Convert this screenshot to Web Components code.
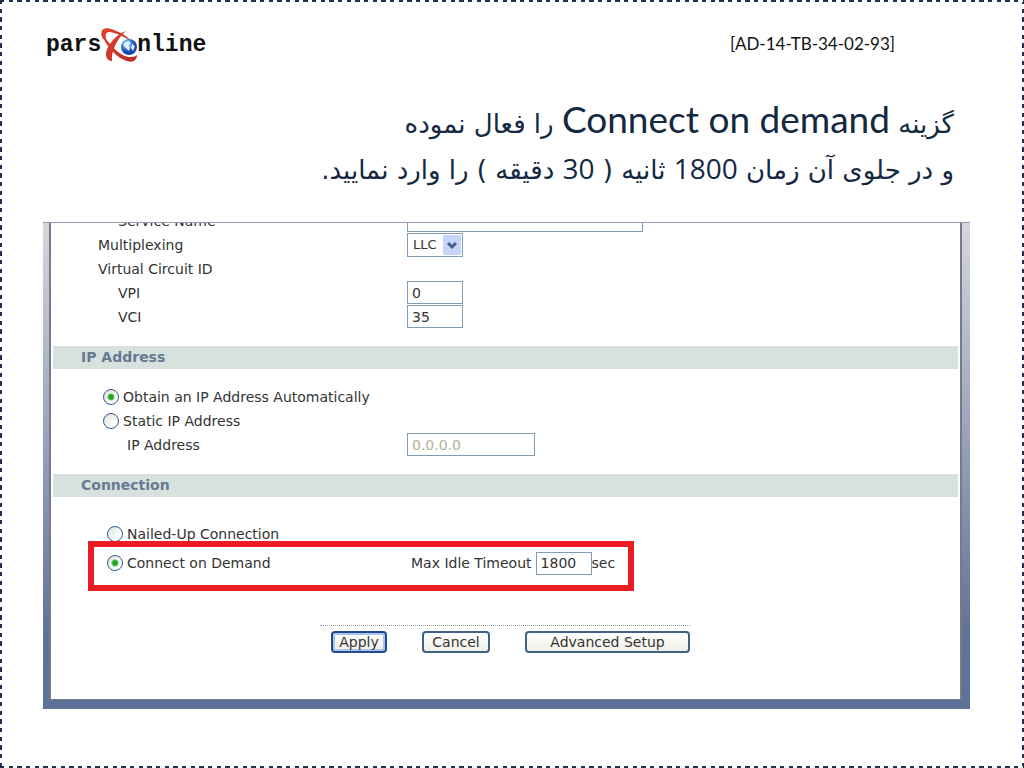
<!DOCTYPE html>
<html lang="fa">
<head>
<meta charset="utf-8">
<title>Connect on demand</title>
<style>
html, body { margin: 0; background: #fff; }
</style>
</head>
<body>
<training-slide>
  <brand-logo slot="logo"></brand-logo>
  <span slot="code">[AD-14-TB-34-02-93]</span>
  <slide-title slot="title"></slide-title>
  <router-panel>
    <form-row label="Service Name" indent="2" width="236"></form-row>
    <form-row label="Multiplexing" indent="1" kind="select" value="LLC"></form-row>
    <form-row label="Virtual Circuit ID" indent="1" kind="none"></form-row>
    <form-row label="VPI" indent="2" value="0"></form-row>
    <form-row label="VCI" indent="2" value="35"></form-row>
    <section-bar>IP Address</section-bar>
    <address-options></address-options>
    <section-bar>Connection</section-bar>
    <connection-options></connection-options>
    <form-actions></form-actions>
  </router-panel>
</training-slide>

<script>
const controls = `
  * { box-sizing: border-box; }
  input, select, button { font: inherit; margin: 0; color: #333; }
  label { color: #333; white-space: nowrap; }
  input[type=text] { width: 56px; height: 23px; padding: 0 4px; border: 1px solid #7f9db9; border-radius: 0; background: #fff; outline: 0; }
  input[type=text]:disabled { color: #b5b09c; }
  input[type=radio] { appearance: none; width: 16px; height: 16px; flex: none; border: 1px solid #2f5a88; border-radius: 50%;
    background: linear-gradient(135deg, #dcdcd6, #fff 70%); }
  input[type=radio]:checked { background: radial-gradient(circle, #21a121 0 2px, #5cc55a 3px, transparent 4px), linear-gradient(135deg, #dcdcd6, #fff 70%); }
  .option { display: flex; align-items: center; gap: 4px; height: 24px; }
`;

function define(name, render) {
  customElements.define(name, class extends HTMLElement {
    connectedCallback() {
      if (this.shadowRoot) return;
      this.attachShadow({ mode: "open" }).innerHTML = render(this);
    }
  });
}

define("training-slide", () => {
  const dashes = angle => `repeating-linear-gradient(${angle}, #1d2f54 0 4px, #fff 4px 9px, #1d2f54 9px 13px, #fff 13px 17px, #1d2f54 17px 22px, #fff 22px 26px)`;
  return `
  <style>
    :host { display: block; box-sizing: border-box; min-height: 100vh; padding: 25px 54px 59px 43px;
      background:
        ${dashes("90deg")} top / 100% 2px no-repeat,
        ${dashes("90deg")} bottom / 100% 2px no-repeat,
        ${dashes("180deg")} left / 2px 100% no-repeat,
        ${dashes("180deg")} right / 2px 100% no-repeat,
        #fff; }
    header { display: flex; justify-content: space-between; align-items: center; height: 38px; padding: 0 75px 0 3px; }
    .code { font: 17px/20px Lato, sans-serif; color: #111; }
    .title { padding: 32px 16px 0 0; height: 127px; }
  </style>
  <header><slot name="logo"></slot><div class="code"><slot name="code"></slot></div></header>
  <div class="title"><slot name="title"></slot></div>
  <main><slot></slot></main>`;
});

define("brand-logo", () => `
  <style>
    :host { display: flex; align-items: center; font: bold 23px/28px "Liberation Mono", monospace; color: #111; }
    span { padding-top: 2px; }
    svg { display: block; width: 36px; height: 38px; }
  </style>
  <span>pars</span>
  <svg viewBox="0 0 36 38" aria-hidden="true">
    <defs>
      <radialGradient id="globe" cx="35%" cy="30%"><stop offset="0" stop-color="#cfeaff"/><stop offset=".6" stop-color="#4386dc"/><stop offset="1" stop-color="#1746ae"/></radialGradient>
      <linearGradient id="red" x2="1" y2="1"><stop stop-color="#e8432f"/><stop offset="1" stop-color="#b92a20"/></linearGradient>
    </defs>
    <path d="M2 14C-3 4 4 1 13 5C21 8 27 12 30 16C24 12 15 8 9 7C5 7 4 9 5 13Z" fill="url(#red)"/>
    <path d="M1 11L4 12C10 22 19 30 27 32C31 32 34 32 36 30C36 35 32 38 26 36C16 33 6 22 1 11Z" fill="url(#red)"/>
    <path d="M25 6C15 9 5 22 5 29C5 34 8 36 11 36C10 28 15 14 25 6Z" fill="url(#red)"/>
    <circle cx="28" cy="22" r="8" fill="url(#globe)"/>
    <path d="M23 18l5-2 2 3-3 1 2 2-1 4-3-3-2-2zM31 19l3 2-2 5-2-3z" fill="#dff3ff"/>
  </svg>
  <span>nline</span>`);

define("slide-title", () => `
  <style>
    :host { display: block; }
    h1 { margin: 0; direction: rtl; font: 400 26px/50px "DejaVu Sans", sans-serif; color: #14283f; white-space: nowrap; }
    h1 > span { display: block; height: 49px; }
    bdi { font: 37px/48px Lato, sans-serif; }
    .num { font: 28px/48px "Open Sans", sans-serif; }
  </style>
  <h1><span>گزینه <bdi>Connect on demand</bdi> را فعال نموده</span>
  <span>و در جلوی آن زمان <bdi class="num">1800</bdi> ثانیه ( <bdi class="num">30</bdi> دقیقه ) را وارد نمایید.</span></h1>`);

define("router-panel", () => `
  <style>
    :host { display: block; box-sizing: border-box; border-top: 1px solid #9a9cb4; padding: 0 8px 9px 6px; direction: ltr;
      background: linear-gradient(#d6d6dc, #5f7398 85%, #5d7299); font: 14px/24px "DejaVu Sans", sans-serif; color: #333; }
    .page { overflow: hidden; background: #fff; border: solid #777b88; border-width: 0 2px 1px; padding-bottom: 46px; }
    .rows { margin-top: -14px; }
  </style>
  <div class="page"><div class="rows"><slot></slot></div></div>`);

define("form-row", el => {
  const value = el.getAttribute("value") || "";
  const kind = el.getAttribute("kind");
  const tag = kind === "none" ? "span" : "label";
  let control = `<input id="field" type="text" value="${value}" style="width:${el.getAttribute("width") || 56}px">`;
  if (kind === "none") control = "";
  if (kind === "select") control = `<div class="pick"><select id="field"><option>${value}</option></select>
    <svg viewBox="0 0 18 20" aria-hidden="true"><rect width="18" height="20" rx="1" fill="#c6d5fc"/><path d="M5 8l4 4 4-4" fill="none" stroke="#45608c" stroke-width="3"/></svg></div>`;
  return `
  <style>${controls}
    :host { display: grid; grid-template-columns: 356px 1fr; height: 24px; }
    .name { padding-left: ${el.getAttribute("indent") === "2" ? 67 : 47}px; }
    .pick { display: grid; grid-template-rows: 24px; width: 56px; }
    .pick > * { grid-area: 1 / 1; }
    select { appearance: none; height: 24px; border: 1px solid #7f9db9; border-radius: 0; background: #fff; padding: 0 5px; font-size: 13px; line-height: 20px; }
    svg { width: 18px; height: 20px; justify-self: end; align-self: center; margin-right: 2px; pointer-events: none; }
  </style>
  <${tag} class="name" ${tag === "label" ? 'for="field"' : ""}>${el.getAttribute("label")}</${tag}>${control}`;
});

define("section-bar", () => `
  <style>
    :host { display: block; margin: 17px 2px 0; }
    h2 { margin: 0; padding-left: 28px; font: bold 14px/23px "DejaVu Sans", sans-serif; color: #667a92; background: #d7e2de; }
  </style>
  <h2><slot></slot></h2>`);

define("address-options", () => `
  <style>${controls}
    :host { display: block; padding-top: 16px; }
    .option { padding-left: 52px; }
    .row { display: grid; grid-template-columns: 356px 1fr; height: 24px; }
    .row label { padding-left: 76px; }
    .row input { width: 128px; }
  </style>
  <div class="option"><input type="radio" name="ip" id="auto" checked><label for="auto">Obtain an IP Address Automatically</label></div>
  <div class="option"><input type="radio" name="ip" id="static"><label for="static">Static IP Address</label></div>
  <div class="row"><label for="addr">IP Address</label><input type="text" id="addr" value="0.0.0.0" disabled></div>`);

define("connection-options", () => `
  <style>${controls}
    :host { display: block; padding-top: 25px; }
    .first { padding-left: 56px; }
    .marked { position: relative; display: grid; grid-template-columns: 304px 1fr; align-items: center; width: 546px; height: 50px;
      margin: -5px 0 0 37px; padding: 0 0 0 13px; border: 6px solid #ea1c24; }
    .marked > * { margin-bottom: 6px; }
    .idle { display: flex; align-items: center; }
    .idle label { margin-right: 4px; }
  </style>
  <div class="option first"><input type="radio" name="mode" id="nailed"><label for="nailed">Nailed-Up Connection</label></div>
  <div class="marked">
    <div class="option"><input type="radio" name="mode" id="demand" checked><label for="demand">Connect on Demand</label></div>
    <div class="idle"><label for="idle">Max Idle Timeout</label><input type="text" id="idle" value="1800"><span>sec</span></div>
  </div>`);

define("form-actions", () => `
  <style>${controls}
    :host { display: block; margin: 34px 0 0 269px; }
    .bar { display: flex; width: 370px; padding: 5px 0 0 11px; border-top: 1px dotted #999; }
    button { height: 22px; padding: 0; line-height: 18px; border: 2px solid #3c6285; border-radius: 4px; background: linear-gradient(#fff, #f1efe8); }
    .apply { width: 56px; border-color: #1f4a8c; box-shadow: inset 0 0 0 2px #a9c4f2; }
    .cancel { width: 68px; margin: 0 35px; }
    .advanced { width: 165px; }
  </style>
  <div class="bar"><button class="apply">Apply</button><button class="cancel">Cancel</button><button class="advanced">Advanced Setup</button></div>`);
</script>
</body>
</html>
